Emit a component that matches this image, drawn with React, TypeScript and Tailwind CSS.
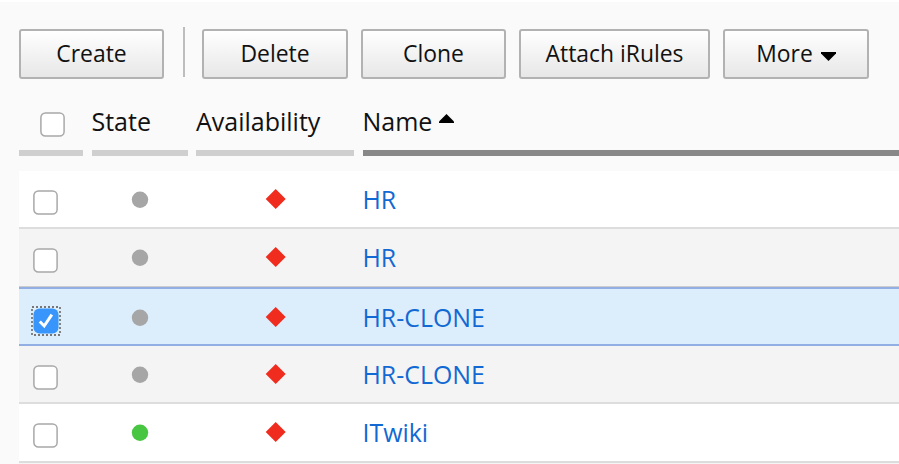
import React from 'react';

const GRID = 'grid grid-cols-[64px_96px_158px_1fr] gap-x-[8.5px]';

function Button({ children, className }: { children: React.ReactNode; className: string }) {
  return (
    <button
      className={`flex h-[50px] shrink-0 items-center justify-center rounded-[3px] border-2 border-[#b2b2b2] bg-linear-to-b from-white to-[#e7e7e7] pt-px text-[22.9px] leading-none text-[#111] ${className}`}
    >
      {children}
    </button>
  );
}

function Checkbox({ checked = false }: { checked?: boolean }) {
  if (checked) {
    return (
      <svg className="-m-[2.5px] h-[30px] w-[30px] shrink-0" viewBox="0 0 30 30">
        <rect x="1" y="1" width="28" height="28" fill="none" stroke="#777" strokeWidth="1.8" strokeDasharray="2 2" />
        <rect x="2.5" y="2.5" width="25" height="25" rx="6" fill="#3795fb" />
        <path d="M8.8 15.5 13.2 20 20.8 8.7" fill="none" stroke="#fff" strokeWidth="3" />
      </svg>
    );
  }
  return (
    <svg className="h-[25px] w-[25px] shrink-0" viewBox="0 0 25 25">
      <rect x="0.9" y="0.9" width="23.2" height="23.2" rx="4.5" fill="#fff" stroke="#a8a8a8" strokeWidth="1.5" />
    </svg>
  );
}

interface RowProps {
  name: string;
  className: string;
  active?: boolean;
  checked?: boolean;
}

function Row({ name, className, active, checked }: RowProps) {
  return (
    <div className={`${GRID} ${className}`}>
      <div className="flex pt-[6px] pl-[14px]">
        <Checkbox checked={checked} />
      </div>
      <div className="flex justify-center pt-[7px]">
        <svg className="h-[18px] w-[18px]" viewBox="0 0 18 18">
          <circle cx="9" cy="8.8" r="8.2" fill={active ? '#48c641' : '#a6a6a6'} />
        </svg>
      </div>
      <div className="flex justify-center pt-1">
        <svg className="h-[22px] w-[22px]" viewBox="0 0 22 22">
          <path d="M11.7 1 21.7 11 11.7 21 1.7 11Z" fill="#f02c1e" />
        </svg>
      </div>
      <a className="h-[30px] text-[24.9px] leading-[30px] whitespace-nowrap text-[#1269d3]">{name}</a>
    </div>
  );
}

export default function App() {
  return (
    <div className="h-[464px] w-[899px] overflow-hidden border-t-2 border-white bg-[#fafafa] pl-[19px] text-[#111] [font-family:'Open_Sans',sans-serif]">
      <div className="flex h-[77px] items-end">
        <Button className="w-[145px]">Create</Button>
        <div className="mb-[2px] ml-[19px] h-[50px] w-[2px] bg-[#bdbdbd]" />
        <Button className="ml-[17px] w-[146px]">Delete</Button>
        <Button className="ml-[13px] w-[145px]">Clone</Button>
        <Button className="ml-[13px] w-[191px]">Attach iRules</Button>
        <Button className="ml-[13px] w-[146px]">
          More
          <svg className="mt-[3px] ml-[8px] h-[9px] w-[15px]" viewBox="0 0 15 9">
            <path d="M0 0H15V1.5L7.5 9 0 1.5Z" fill="#000" />
          </svg>
        </Button>
      </div>
      <div className={`${GRID} h-[77px] text-[25px] leading-[34px]`}>
        <div className="h-[77px] border-b-6 border-[#cfcfcf] pt-[33px] pl-[21px]">
          <Checkbox />
        </div>
        <div className="h-[77px] border-b-6 border-[#cfcfcf] pt-[25px]">State</div>
        <div className="h-[77px] border-b-6 border-[#cfcfcf] pt-[25px]">Availability</div>
        <div className="flex h-[77px] border-b-6 border-[#888] pt-[25px]">
          Name
          <svg className="mt-[10px] ml-[7px] h-[9px] w-[15px]" viewBox="0 0 15 9">
            <path d="M0 9H15V7.5L7.5 0 0 7.5Z" fill="#000" />
          </svg>
        </div>
      </div>
      <div className="mt-[15px]">
        <Row name="HR" className="h-[58px] border-b-2 border-[#ddd] bg-white pt-[13px]" />
        <Row name="HR" className="h-[58px] border-b border-[#ccc] bg-[#f4f4f4] pt-[13px]" />
        <Row name="HR-CLONE" checked className="h-[59px] border-y-2 border-[#91afe2] bg-[#dcedfc] pt-[13px]" />
        <Row name="HR-CLONE" className="h-[58px] border-b-2 border-[#ddd] bg-[#f4f4f4] pt-[13px]" />
        <Row name="ITwiki" active className="h-[59px] border-b-2 border-[#ddd] bg-white pt-[13px]" />
        <div className="h-2 bg-[#f4f4f4]" />
      </div>
    </div>
  );
}
